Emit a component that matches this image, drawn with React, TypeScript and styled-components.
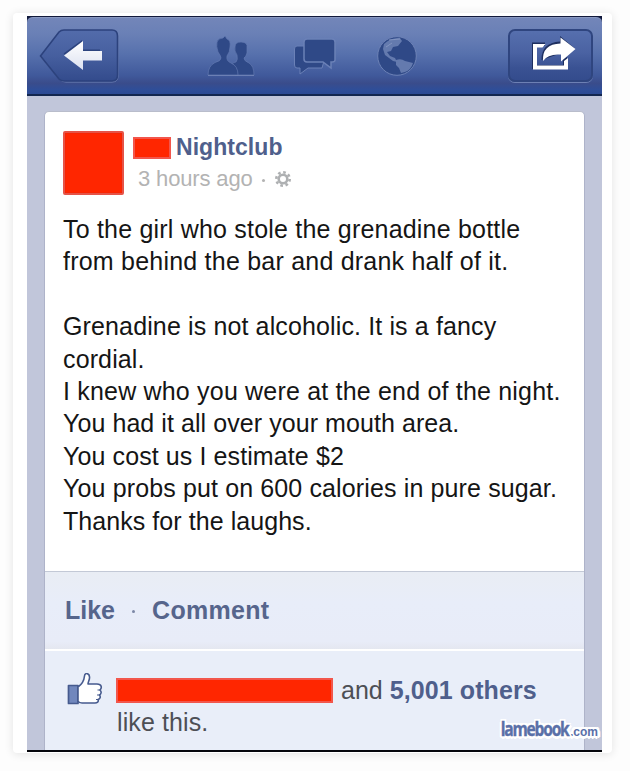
import React from "react";
import styled, { createGlobalStyle } from "styled-components";

const GlobalStyle = createGlobalStyle`
  * { box-sizing: border-box; }
  body { margin: 0; background: #fdfdfd; font-family: "Liberation Sans", Arial, sans-serif; }
`;

const Page = styled.div`
  width: 630px;
  height: 771px;
  padding: 13px 0 0 13px;
  overflow: hidden;
`;

const Frame = styled.div`
  width: 599px;
  height: 740px;
  padding: 3px 10px 1px 14px;
  background: #fff;
  border-radius: 4px;
  box-shadow: 0 1px 10px rgba(0, 0, 0, 0.11);
`;

const Screen = styled.main`
  position: relative;
  display: flex;
  flex-direction: column;
  height: 736px;
  background: #c1c6da;
  border-bottom: 2px solid #05060c;
  overflow: hidden;
`;

const HeaderBack = styled.div`
  flex: none;
  background: #10183a;
`;

const Header = styled.header`
  display: flex;
  align-items: center;
  height: 80px;
  padding: 0 9px 0 12px;
  border-top: 1px solid #10183a;
  border-bottom: 2px solid #13274f;
  border-radius: 6px 6px 0 0;
  background: linear-gradient(#7386b9 0, #6a80b6 22%, #5771ad 48%, #40599b 76%, #3a4c8b 86%, #2f4e98 94%, #2c4a93 100%);
  box-shadow: inset 0 1px 0 #8897bf;
`;

const BackButton = styled.button`
  display: block;
  width: 80px;
  height: 56px;
  padding: 0;
  border: 0;
  background: none;
`;

const NavIcons = styled.nav`
  display: flex;
  align-items: center;
  gap: 38px;
  margin-left: 87px;
  flex: 1;
`;

const ShareButton = styled.button`
  display: flex;
  width: 85px;
  height: 53px;
  padding: 0;
  border: 2px solid #2f457f;
  border-radius: 7px;
  background: linear-gradient(#566fae 0, #4a62a2 45%, #3a5293 75%, #344c8d 100%);
  box-shadow: 0 1px 0 #6d80b4;
`;

const Card = styled.article`
  flex: 1;
  margin: 15px 17px 0 17px;
  border: 1px solid #aeb3c9;
  border-top-color: #b9bdcb;
  border-bottom: 0;
  border-radius: 5px 5px 0 0;
  background: #fff;
  overflow: hidden;
`;

const PostHead = styled.div`
  display: flex;
  height: 82px;
  padding: 19px 0 0 18px;
`;

const Avatar = styled.div`
  width: 61px;
  height: 64px;
  border: 2px solid #e65347;
  border-radius: 2px;
  background: #ff2600;
  box-shadow: inset 0 0 1px #b22;
`;

const Byline = styled.div`
  display: flex;
  flex-direction: column;
  padding: 4px 0 0 9px;
`;

const NameRow = styled.div`
  display: flex;
  align-items: center;
  height: 25px;
`;

const Redaction = styled.span<{ $w: number; $h: number }>`
  display: inline-block;
  flex: none;
  width: ${p => p.$w}px;
  height: ${p => p.$h}px;
  border: 2px solid #f2564c;
  background: #ff2600;
`;

const Line = styled.span<{ $ls?: number }>`
  display: block;
  white-space: pre;
  letter-spacing: ${p => p.$ls ?? 0}px;
`;

const Name = styled.h1`
  margin: 0 0 0 5px;
  font-size: 23px;
  line-height: 25px;
  color: #4f5f8c;
`;

const Meta = styled.div`
  display: flex;
  align-items: center;
  height: 32px;
  margin: 3px 0 0 5px;
  font-size: 22px;
  color: #b3b3b3;
`;

const Dot = styled.span<{ $gap: number; $color: string }>`
  width: 3px;
  height: 3px;
  margin: 3px ${p => p.$gap}px 0;
  border-radius: 50%;
  background: ${p => p.$color};
`;

const Body = styled.div`
  height: 377px;
  padding: 19px 0 0 18px;
  font-size: 25px;
  line-height: 32.4px;
  color: #151515;
`;

const Actions = styled.div`
  display: flex;
  align-items: center;
  height: 80px;
  padding: 0 0 1px 20px;
  border-top: 1px solid #c3c9d6;
  border-bottom: 2px solid #fff;
  background: linear-gradient(#e9edf4, #e8edf9 40%, #e8ecf8 90%, #e4e7f0);
  font-size: 25px;
  font-weight: bold;
  color: #56658c;
`;

const Likes = styled.div`
  display: flex;
  height: 110px;
  padding: 22px 0 0 21px;
  background: #e9eef9;
  font-size: 25px;
  line-height: 29px;
  color: #4d4f55;
`;

const LikeText = styled.div`
  margin-left: 13px;
`;

const LikeRow = styled.div`
  display: flex;
  align-items: center;
  height: 35px;
  gap: 8px;
`;

const LikeTail = styled(Line)`
  margin-left: 1px;
`;

const Others = styled.b`
  color: #4f5f8c;
  letter-spacing: 0.1px;
  margin-left: -1px;
`;

const Watermark = styled.div`
  position: absolute;
  right: 4px;
  bottom: 6px;
  display: flex;
  align-items: baseline;
  color: #5a70a8;
  font-weight: bold;
  line-height: 23px;
  text-shadow: 2px 0 #fff, -2px 0 #fff, 0 2px #fff, 0 -2px #fff, 2px 2px #fff, -2px 2px #fff,
    2px -2px #fff, -2px -2px #fff, 3px 1px #fff, -3px 1px #fff, 0 3px #fff;
`;

const Brand = styled.span`
  display: block;
  font-family: "Open Sans", sans-serif;
  font-size: 19px;
  font-weight: 700;
  letter-spacing: -1.5px;
  transform: scaleX(0.82);
  transform-origin: right;
  -webkit-text-stroke: 0.4px #5a70a8;
`;

const Tld = styled.span`
  margin-left: 1px;
  font-size: 12px;
`;

const BackArt = () => (
  <svg width="80" height="56" viewBox="0 0 80 56">
    <defs>
      <linearGradient id="bk" x1="0" y1="0" x2="0" y2="1">
        <stop offset="0" stopColor="#536cab" />
        <stop offset=".5" stopColor="#465f9f" />
        <stop offset="1" stopColor="#334b8c" />
      </linearGradient>
      <linearGradient id="ar" x1="0" y1="0" x2="0" y2="1">
        <stop offset="0" stopColor="#fff" />
        <stop offset="1" stopColor="#dce1f0" />
      </linearGradient>
    </defs>
    <path d="M22 4Q24 2.500 27 2.500H73Q79 2.500 79 8.500V48Q79 54 73 54H27Q24 54 21 52L1.500 28.500Z" fill="none" stroke="#7183b5" />
    <path d="M20 4Q22 2 25 2H73Q78.500 2 78.500 8V47Q78.500 53 73 53H25Q22 53 20 51L1.500 28Z" fill="url(#bk)" stroke="#2c427d" strokeWidth="1.600" />
    <path d="M24.500 25.500L43 12V21.500H61V31H43V40Z" fill="#2c437e" />
    <path d="M25 27.500L44 13V23H63V32.500H44V42Z" fill="url(#ar)" />
  </svg>
);

const FriendsArt = () => (
  <svg width="50" height="44" viewBox="0 0 50 44" fill="#2f4987" stroke="#6279b0" strokeWidth=".7">
    <path d="M29 41Q31 35 27 31Q25 29 30 28Q32 26 31 21Q28 17 29 13Q29 8 35 8Q42 8 41 14L41 19Q40 23 38 24Q38 27 43 29Q48 32 48 41Z" />
    <path d="M2 41Q2 32 9 28.500Q15 27 15 24Q15 22 12 18Q10 12 11 8Q12 4 17 4L19 2L21 5Q25 6 24 13Q24 18 21 22Q20 27 25 29Q32 32 32 41Z" />
    <path d="M2 41.500H48" stroke="#7b8dbd" />
  </svg>
);

const ChatArt = () => (
  <svg width="44" height="44" viewBox="0 0 44 44" fill="#2f4987" stroke="#6b81b7" strokeWidth="1">
    <path d="M3 12H11V27H30L28 34H14L6 40V34H3Q0.500 34 0.500 31V15Q0.500 12 3 12Z" />
    <path d="M13 5H38Q41 5 41 8V26Q41 28 38 28H37V34L29 28H13Q10 28 10 25V8Q10 5 13 5Z" strokeWidth="1.500" />
  </svg>
);

const GlobeArt = () => (
  <svg width="42" height="44" viewBox="0 0 42 44">
    <circle cx="21" cy="22" r="19.300" fill="#2f4987" stroke="#6d82b6" />
    <path d="M8 10Q15 3 24 4L26 7L22 12L17 13L15 17L11 18L14 22L19 24L21 28L17 27L9 21L7 15Z" fill="#647aae" />
    <path d="M20 26Q25 24 29 27L37 29Q35 36 29 38L25 39L23 34L20 31Z" fill="#647aae" />
    <path d="M13 6L24 5M10 13L16 9" stroke="#8294c0" />
  </svg>
);

const ShareArt = () => (
  <svg width="81" height="49" viewBox="0 0 81 49">
    <path d="M22 11.500H35V15H26V34H53V28L57 26V38H22Z" fill="#1e2f5f" />
    <path d="M23 13H35.500L32.500 16.500H27V34.500H54V30L58 27V38.500H23Z" fill="#fff" />
    <path d="M31.500 29Q31 12 50 10.500V5L65 17.500" fill="#1e2f5f" />
    <path d="M33 30Q32 13 50.500 12.500V6.500L65.500 18L51 30.500V23.500Q38 22.500 33 30Z" fill="#fff" />
  </svg>
);

const GearArt = () => (
  <svg width="18" height="18" viewBox="0 0 18 18" fill="none" stroke="#aeb0b2">
    <circle cx="9" cy="9" r="4.300" strokeWidth="2.600" />
    <circle cx="9" cy="9" r="6.700" strokeWidth="2.600" strokeDasharray="2.630 2.630" />
  </svg>
);

const ThumbArt = () => (
  <svg width="37" height="36" viewBox="0 0 37 36" strokeLinejoin="round" stroke="#465a8e">
    <path d="M2.500 12.500H12V30.500H2.500Z" fill="#7187bd" strokeWidth="1.700" />
    <path d="M12 14C15 12 18 8 18.500 3C19 -1 24 0 23.500 5C23.500 7 22 9 22 11H31C36 11 36 15 34 17C36 19 35 21 33.500 22C35 24 34 26 32 26.500C33 29 31 30 29 30H16Q13 30 12 28Z" fill="#fff" strokeWidth="1.600" />
    <path d="M34 17H31.500M33.500 22H31M32 26.500H30" strokeWidth="1" />
  </svg>
);

const post: [string, number][] = [
  ["To the girl who stole the grenadine bottle", 0.2],
  ["from behind the bar and drank half of it.", 0.22],
  [" ", 0],
  ["Grenadine is not alcoholic. It is a fancy", 0.13],
  ["cordial.", 0.13],
  ["I knew who you were at the end of the night.", 0.19],
  ["You had it all over your mouth area.", 0.07],
  ["You cost us I estimate $2", 0.1],
  ["You probs put on 600 calories in pure sugar.", 0.13],
  ["Thanks for the laughs.", 0.06],
];

export default function App() {
  return (
    <Page>
      <GlobalStyle />
      <Frame>
        <Screen>
          <HeaderBack>
            <Header>
              <BackButton aria-label="Back"><BackArt /></BackButton>
              <NavIcons>
                <FriendsArt />
                <ChatArt />
                <GlobeArt />
              </NavIcons>
              <ShareButton aria-label="Share"><ShareArt /></ShareButton>
            </Header>
          </HeaderBack>
          <Card>
            <PostHead>
              <Avatar />
              <Byline>
                <NameRow>
                  <Redaction $w={38} $h={22} />
                  <Name><Line $ls={0.05}>Nightclub</Line></Name>
                </NameRow>
                <Meta>
                  <Line $ls={-0.15}>3 hours ago</Line>
                  <Dot $gap={9} $color="#b3b3b3" />
                  <GearArt />
                </Meta>
              </Byline>
            </PostHead>
            <Body>
              {post.map(([text, ls], i) => <Line key={i} $ls={ls}>{text}</Line>)}
            </Body>
            <Actions>
              <Line>Like</Line>
              <Dot $gap={17} $color="#7c88a6" />
              <Line $ls={0.3}>Comment</Line>
            </Actions>
            <Likes>
              <ThumbArt />
              <LikeText>
                <LikeRow>
                  <Redaction $w={217} $h={25} />
                  <Line>and</Line>
                  <Others>5,001 others</Others>
                </LikeRow>
                <LikeTail $ls={0.1}>like this.</LikeTail>
              </LikeText>
            </Likes>
          </Card>
          <Watermark><Brand>lamebook</Brand><Tld>.com</Tld></Watermark>
        </Screen>
      </Frame>
    </Page>
  );
}
